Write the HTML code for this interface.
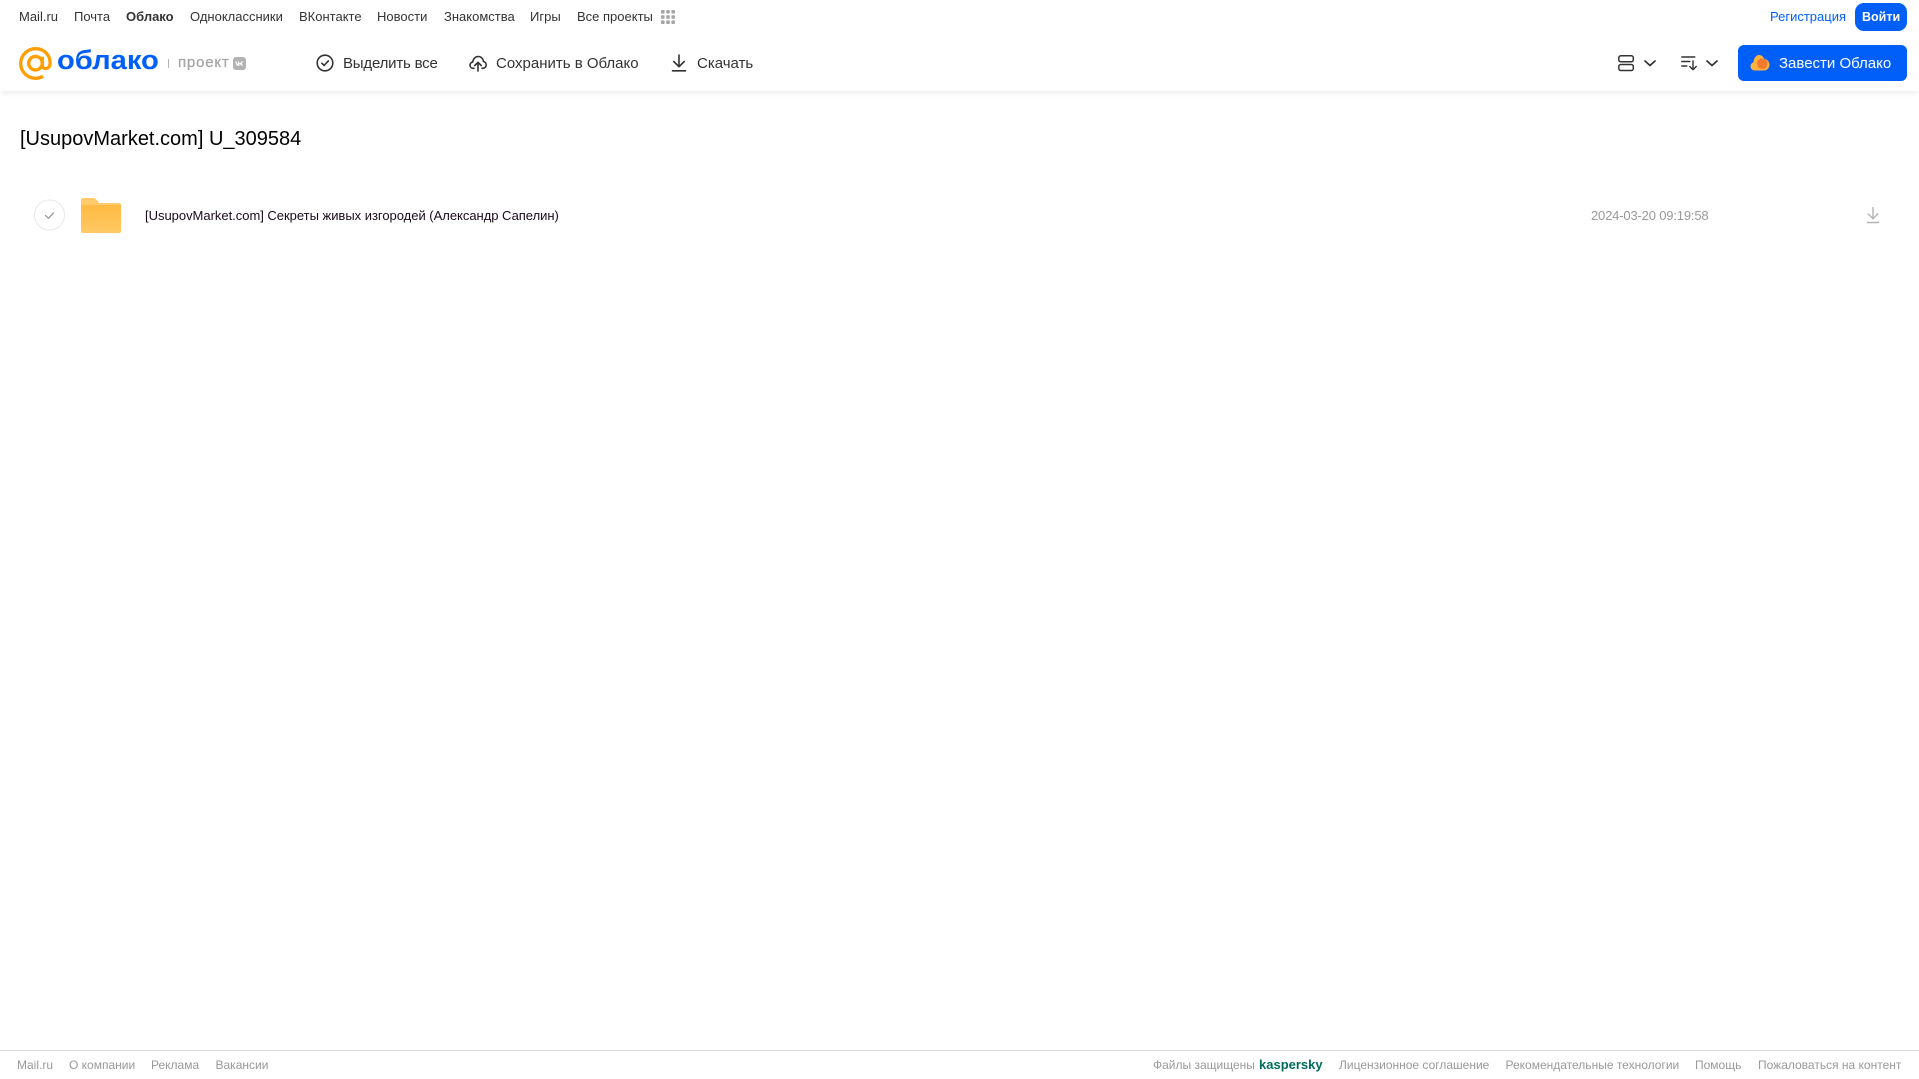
<!DOCTYPE html>
<html lang="ru">
<head>
<meta charset="utf-8">
<title>Облако</title>
<style>
html,body{margin:0;padding:0;background:#fff;width:1919px;height:1079px;overflow:hidden}
body{position:relative;font-family:"Liberation Sans",Arial,sans-serif}
.t{position:absolute;white-space:nowrap;line-height:20px;height:20px}
.n{top:7px;font-size:13px;color:#333}
.h{top:54px;font-size:15px;color:#333}
.f{top:1055px;font-size:12px;color:#999}
svg{position:absolute;overflow:visible}
#head{position:absolute;left:0;top:0;width:1919px;height:91px;background:#fff;box-shadow:0 1px 6px rgba(0,0,0,.1)}
#foot{position:absolute;left:0;top:1050px;width:1919px;height:1px;background:#d9d9d9}
.btn{position:absolute;background:#005ff9}
</style>
</head>
<body>
<div id="head"></div>

<span class="t n" style="left:19px">Mail.ru</span>
<span class="t n" style="left:74px">Почта</span>
<span class="t n" style="left:126px;font-weight:bold">Облако</span>
<span class="t n" style="left:190px">Одноклассники</span>
<span class="t n" style="left:299px">ВКонтакте</span>
<span class="t n" style="left:377px">Новости</span>
<span class="t n" style="left:444px">Знакомства</span>
<span class="t n" style="left:530px">Игры</span>
<span class="t n" style="left:577px">Все проекты</span>
<svg style="left:661px;top:10px" width="14" height="14" viewBox="0 0 14 14" fill="#a6a6a6">
<rect x="0" y="0" width="3.6" height="3.6" rx=".8"/><rect x="5.2" y="0" width="3.6" height="3.6" rx=".8"/><rect x="10.4" y="0" width="3.6" height="3.6" rx=".8"/>
<rect x="0" y="5.2" width="3.6" height="3.6" rx=".8"/><rect x="5.2" y="5.2" width="3.6" height="3.6" rx=".8"/><rect x="10.4" y="5.2" width="3.6" height="3.6" rx=".8"/>
<rect x="0" y="10.4" width="3.6" height="3.6" rx=".8"/><rect x="5.2" y="10.4" width="3.6" height="3.6" rx=".8"/><rect x="10.4" y="10.4" width="3.6" height="3.6" rx=".8"/>
</svg>

<span class="t n" style="left:1770px;color:#005ff9">Регистрация</span>
<div class="btn" style="left:1855px;top:3px;width:52px;height:28px;border-radius:9px"></div>
<span class="t n" style="left:1862px;color:#fff;font-weight:bold;font-size:12.500px">Войти</span>

<!-- logo -->
<svg style="left:19px;top:47px" width="33" height="33" viewBox="0 0 33 33" fill="none" stroke="#ff9e00" stroke-width="3.300">
<circle cx="16.500" cy="16.200" r="6.800"/>
<path d="M23.300 9.800v8.400c0 4.800 7.700 4.800 7.800-2C31.200 7.500 24.600 1.700 16.500 1.700 8.400 1.700 1.700 8.400 1.700 16.500S8.400 31.300 16.500 31.300c3 0 5.400-.7 7.600-2.100"/>
</svg>
<span class="t" style="left:57px;top:45px;height:30px;line-height:30px;font-size:27px;font-weight:bold;color:#005ff9;transform:scaleX(1.08);transform-origin:0 50%">облако</span>
<div style="position:absolute;left:168px;top:59px;width:1px;height:9px;background:#b5b5b5"></div>
<span class="t" style="left:178px;top:53px;font-size:15px;color:#a6a6a6;letter-spacing:.8px;-webkit-text-stroke:.3px #a6a6a6">проект</span>
<div style="position:absolute;left:233px;top:57px;width:13px;height:13px;border-radius:3px;background:#b3b3b3"></div>
<svg style="left:233px;top:57px" width="13" height="13" viewBox="0 0 13 13" fill="none" stroke="#fff" stroke-width="1.200"><path d="M3 4.500c.3 2.600 1.500 4 3.200 4M5.500 4.500v3.800M9.500 4.500C9 5.800 8 6.500 6 6.700c2 .2 3 1 3.600 2"/></svg>

<!-- toolbar -->
<svg style="left:316px;top:54px" width="18" height="18" viewBox="0 0 18 18" fill="none" stroke="#333" stroke-width="1.600" stroke-linecap="round" stroke-linejoin="round">
<circle cx="9" cy="9" r="7.800"/><path d="M5.800 9.200l2.300 2.300 4.200-4.600"/>
</svg>
<span class="t h" style="left:343px;letter-spacing:-.2px">Выделить все</span>

<svg style="left:469px;top:54px" width="18" height="18" viewBox="0 0 18 18" fill="none" stroke="#333" stroke-width="1.600" stroke-linecap="round" stroke-linejoin="round">
<path d="M5 14.300H4.200C2.200 14.300 1 12.800 1 11.200c0-1.600 1.100-2.900 2.700-3.100C4 5 6.300 2.500 9.200 2.500c2.900 0 5 2.200 5.300 5 1.500.3 2.700 1.700 2.700 3.400 0 1.900-1.400 3.400-3.300 3.400h-.9"/>
<path d="M9 17V8.500M5.800 11.500L9 8.300l3.200 3.200"/>
</svg>
<span class="t h" style="left:496px">Сохранить в Облако</span>

<svg style="left:671px;top:54px" width="16" height="18" viewBox="0 0 16 18" fill="none" stroke="#333" stroke-width="1.600" stroke-linecap="round" stroke-linejoin="round">
<path d="M8 1v11.500M2.800 7.500L8 12.700l5.200-5.200M1.500 16.800h13"/>
</svg>
<span class="t h" style="left:697px">Скачать</span>

<!-- right controls -->
<svg style="left:1618px;top:55px" width="17" height="17" viewBox="0 0 17 17" fill="none" stroke="#333" stroke-width="1.500">
<rect x=".8" y=".8" width="14.500" height="6" rx="2"/><rect x=".8" y="9.500" width="14.500" height="6" rx="2"/>
</svg>
<svg style="left:1644px;top:60px" width="12" height="7" viewBox="0 0 12 7" fill="none" stroke="#333" stroke-width="1.700" stroke-linecap="round" stroke-linejoin="round"><path d="M1 1l5 4.500L11 1"/></svg>
<svg style="left:1681px;top:56px" width="17" height="15" viewBox="0 0 17 15" fill="none" stroke="#333" stroke-width="1.400" stroke-linecap="round" stroke-linejoin="round">
<path d="M.8 1h13M.8 5.500h8M.8 10h5M12 5v8.500M8.800 10.500l3.200 3.200 3.200-3.200"/>
</svg>
<svg style="left:1706px;top:60px" width="12" height="7" viewBox="0 0 12 7" fill="none" stroke="#333" stroke-width="1.700" stroke-linecap="round" stroke-linejoin="round"><path d="M1 1l5 4.500L11 1"/></svg>

<div class="btn" style="left:1738px;top:45px;width:169px;height:36px;border-radius:6px"></div>
<svg style="left:1750px;top:54px" width="20" height="17" viewBox="0 0 20 17">
<path fill="#ffb13d" d="M5 16.500C2.200 16.500.5 14.600.5 12.300c0-2 1.300-3.600 3-4.100C3.700 4.300 6 1 9 1c2.600 0 4.500 1.800 5.200 4 3 .2 5.300 2.600 5.300 5.700 0 3.300-2.500 5.800-5.700 5.800z"/>
<circle cx="12.200" cy="9.800" r="5.200" fill="#f5792f"/>
</svg>
<span class="t h" style="left:1779px;color:#fff">Завести Облако</span>

<!-- content -->
<span class="t" style="left:20px;top:127px;height:24px;line-height:24px;font-size:20px;color:#000">[UsupovMarket.com] U_309584</span>

<svg style="left:33.500px;top:199px" width="32" height="32" viewBox="0 0 32 32" fill="none">
<circle cx="15.500" cy="16" r="15" stroke="#e8e8e8" stroke-width="1"/>
<path d="M11.500 16.500l3 2.800 5-5.300" stroke="#999" stroke-width="1.300" stroke-linecap="round" stroke-linejoin="round"/>
</svg>
<svg style="left:81px;top:198px" width="40" height="35" viewBox="0 0 40 35">
<defs><linearGradient id="fg" x1="0" y1="0" x2="0" y2="1"><stop offset="0" stop-color="#ffbb42"/><stop offset="1" stop-color="#ffc863"/></linearGradient></defs>
<path fill="#ffca6b" d="M2 0h10.500c1.200 0 2 .5 2.800 1.500L18 5h20a2 2 0 0 1 2 2v4H0V2a2 2 0 0 1 2-2z"/>
<path fill="url(#fg)" d="M0 7h38a2 2 0 0 1 2 2v24a2 2 0 0 1-2 2H2a2 2 0 0 1-2-2z"/>
</svg>
<span class="t" style="left:145px;top:206px;font-size:13px;letter-spacing:-.02px;color:#1a0a1a">[UsupovMarket.com] Секреты живых изгородей (Александр Сапелин)</span>
<span class="t" style="left:1591px;top:206px;font-size:13px;letter-spacing:-.17px;color:#999">2024-03-20 09:19:58</span>
<svg style="left:1866px;top:206px" width="14" height="18" viewBox="0 0 14 18" fill="none" stroke="#b3b3b3" stroke-width="1.400">
<path d="M7 1v11M1.800 7.500L7 12.700l5.200-5.200M.8 16.500h12.400"/>
</svg>

<!-- footer -->
<div id="foot"></div>
<span class="t f" style="left:17px">Mail.ru</span>
<span class="t f" style="left:69px">О компании</span>
<span class="t f" style="left:151px">Реклама</span>
<span class="t f" style="left:215.500px">Вакансии</span>
<span class="t f" style="left:1153px">Файлы защищены</span>
<span class="t f" style="left:1259px;font-weight:bold;font-size:13px;color:#006d5c">kaspersky</span>
<span class="t f" style="left:1339px">Лицензионное соглашение</span>
<span class="t f" style="left:1505.500px">Рекомендательные технологии</span>
<span class="t f" style="left:1695px">Помощь</span>
<span class="t f" style="left:1758px">Пожаловаться на контент</span>
</body>
</html>
